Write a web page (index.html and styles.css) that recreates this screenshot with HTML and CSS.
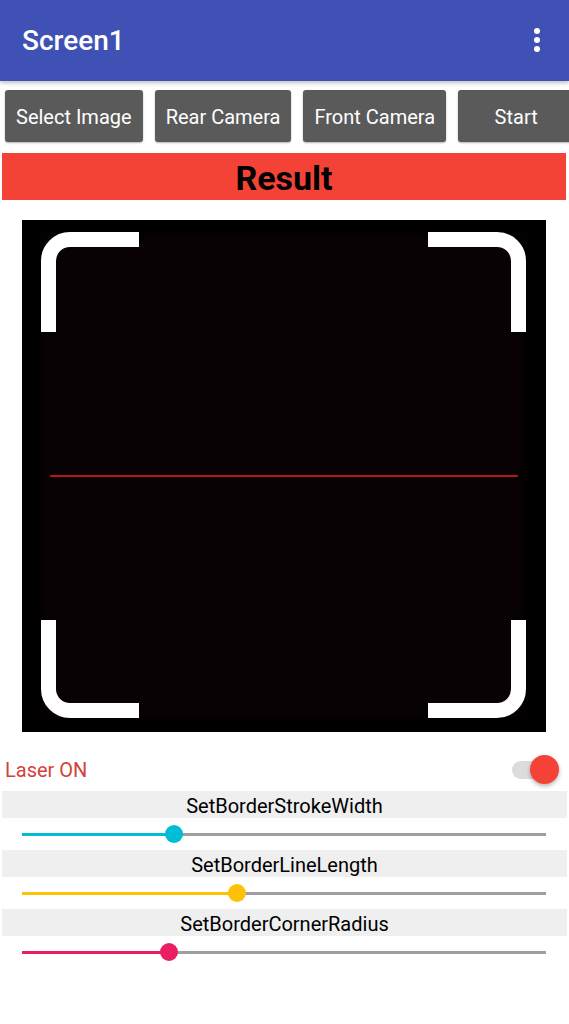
FILE: index.html
```html
<!DOCTYPE html>
<html lang="en">
<head>
    <meta charset="UTF-8">
    <meta name="viewport" content="width=device-width, initial-scale=1.0">
    <title>Screen1</title>
    <link rel="stylesheet" href="styles.css">
</head>
<body>
    <div class="appbar">
        <span class="titulo">Screen1</span>
        <span class="menu"><i></i><i></i><i></i></span>
    </div>

    <div class="botoes">
        <button class="btn">Select Image</button>
        <button class="btn">Rear Camera</button>
        <button class="btn">Front Camera</button>
        <button class="btn">Start</button>
    </div>

    <div class="resultado">Result</div>

    <div class="scanner">
        <div class="preview"></div>
        <div class="laser"></div>
        <svg class="cantos" viewBox="0 0 524 512" width="524" height="512">
            <g fill="none" stroke="#fff" stroke-width="15">
                <path d="M117 19.5 H48 A21.5 21.5 0 0 0 26.5 41 V112"/>
                <path d="M406 19.5 H475 A21.5 21.5 0 0 1 496.5 41 V112"/>
                <path d="M26.5 400 V469 A21.5 21.5 0 0 0 48 490.5 H117"/>
                <path d="M496.5 400 V469 A21.5 21.5 0 0 1 475 490.5 H406"/>
            </g>
        </svg>
    </div>

    <div class="linha-laser">
        <span class="texto-laser">Laser ON</span>
        <span class="switch"><span class="switch-bola"></span></span>
    </div>

    <div class="rotulo">SetBorderStrokeWidth</div>
    <div class="slider">
        <div class="trilho">
            <div class="preenchido ciano" style="width: 29%"></div>
            <div class="bolinha ciano" style="left: 29%"></div>
        </div>
    </div>

    <div class="rotulo">SetBorderLineLength</div>
    <div class="slider">
        <div class="trilho">
            <div class="preenchido ambar" style="width: 41%"></div>
            <div class="bolinha ambar" style="left: 41%"></div>
        </div>
    </div>

    <div class="rotulo">SetBorderCornerRadius</div>
    <div class="slider">
        <div class="trilho">
            <div class="preenchido rosa" style="width: 28%"></div>
            <div class="bolinha rosa" style="left: 28%"></div>
        </div>
    </div>
</body>
</html>
```

FILE: styles.css
```css
body {
    font-family: Roboto, "Noto Sans", sans-serif;
    margin: 0;
    padding: 0;
    background-color: #fff;
    width: 569px;
    overflow: hidden;
}
.appbar {
    height: 81px;
    background-color: #3f51b5;
    display: flex;
    align-items: center;
    justify-content: space-between;
    padding: 0 29px 0 22px;
    box-shadow: 0 2px 4px rgba(0, 0, 0, 0.25);
    position: relative;
}
.titulo {
    color: #fff;
    font-size: 28px;
    font-weight: 500;
}
.menu {
    display: flex;
    flex-direction: column;
    gap: 3px;
    margin-top: -2px;
}
.menu i {
    width: 6px;
    height: 6px;
    border-radius: 50%;
    background-color: #fff;
}
.botoes {
    display: flex;
    gap: 12px;
    margin: 9px 0 0 5px;
    white-space: nowrap;
}
.btn {
    flex: none;
    height: 52px;
    min-width: 116px;
    padding: 0 11px;
    border: none;
    border-radius: 3px;
    background-color: #5a5a5b;
    color: #fff;
    font-family: Roboto, sans-serif;
    font-size: 20px;
    padding-top: 2px;
    box-shadow: 0 1px 2px rgba(0, 0, 0, 0.3);
}
.resultado {
    margin: 11px 3px 0 2px;
    height: 47px;
    background-color: #f44336;
    color: #000;
    font-size: 34px;
    font-weight: bold;
    text-align: center;
    line-height: 51px;
}
.scanner {
    position: relative;
    width: 524px;
    height: 512px;
    margin: 20px 0 0 22px;
    background-color: #000;
}
.preview {
    position: absolute;
    left: 26px;
    top: 20px;
    right: 28px;
    bottom: 20px;
    background-color: #090205;
    box-shadow: 0 0 10px 6px #090205;
}
.laser {
    position: absolute;
    left: 28px;
    right: 28px;
    top: 255px;
    height: 2px;
    background-color: #b5121b;
}
.cantos {
    position: absolute;
    left: 0;
    top: 0;
}
.linha-laser {
    display: flex;
    align-items: center;
    justify-content: space-between;
    height: 36px;
    margin-top: 20px;
    padding: 0 11px 0 5px;
}
.texto-laser {
    color: #d4413a;
    font-size: 20px;
}
.switch {
    position: relative;
    width: 42px;
    height: 18px;
    border-radius: 9px;
    background-color: #dcdcdc;
    margin-right: 4px;
}
.switch-bola {
    position: absolute;
    right: -5px;
    top: -6px;
    width: 29px;
    height: 29px;
    border-radius: 50%;
    background-color: #f44336;
    box-shadow: 0 2px 4px rgba(0, 0, 0, 0.3);
}
.rotulo {
    margin: 3px 2px 0 2px;
    height: 27px;
    line-height: 30px;
    background-color: #efefef;
    text-align: center;
    font-size: 20px;
    color: #000;
}
.slider {
    height: 32px;
    display: flex;
    align-items: center;
    padding: 0 23px 0 22px;
}
.slider + .rotulo {
    margin-top: 0;
}
.trilho {
    position: relative;
    flex: 1;
    height: 3px;
    background-color: #9e9e9e;
}
.preenchido {
    height: 3px;
}
.bolinha {
    position: absolute;
    top: -8px;
    width: 18px;
    height: 18px;
    margin-left: -9px;
    border-radius: 50%;
}
.ciano {
    background-color: #00bcd4;
}
.ambar {
    background-color: #ffc107;
}
.rosa {
    background-color: #e91e63;
}
```
